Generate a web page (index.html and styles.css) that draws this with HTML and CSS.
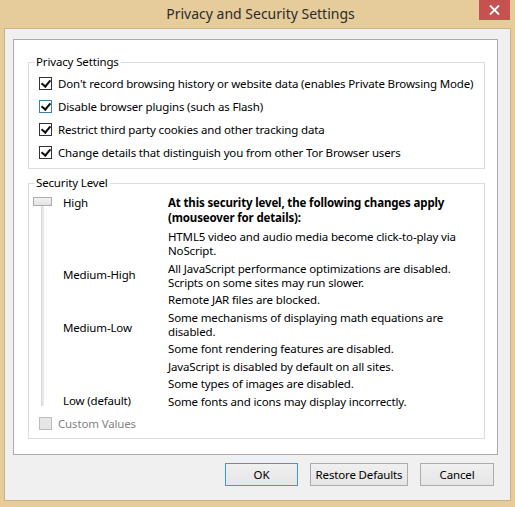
FILE: index.html
```html
<!DOCTYPE html>
<html>
<head>
<meta charset="utf-8">
<link rel="stylesheet" href="styles.css">
</head>
<body>
<div class="window">
  <div class="titlebar">
    <div class="title">Privacy and Security Settings</div>
    <div class="close"><svg width="11" height="10" viewBox="0 0 11 10"><path d="M1 0.5 L10 9.5 M10 0.5 L1 9.5" stroke="#fff" stroke-width="1.8"/></svg></div>
  </div>
  <div class="client">
    <div class="panel">
      <fieldset class="group privacy">
        <legend>Privacy Settings</legend>
        <label class="row"><span class="cb checked"></span><span>Don't record browsing history or website data (enables Private Browsing Mode)</span></label>
        <label class="row"><span class="cb checked hover"></span><span>Disable browser plugins (such as Flash)</span></label>
        <label class="row"><span class="cb checked"></span><span>Restrict third party cookies and other tracking data</span></label>
        <label class="row"><span class="cb checked"></span><span>Change details that distinguish you from other Tor Browser users</span></label>
      </fieldset>
      <fieldset class="group security">
        <legend>Security Level</legend>
        <div class="sec">
          <div class="slider">
            <div class="track-col">
              <div class="thumb"></div>
              <div class="track"></div>
            </div>
            <div class="levels">
              <div class="lvl l1">High</div>
              <div class="lvl l2">Medium-High</div>
              <div class="lvl l3">Medium-Low</div>
              <div class="lvl l4">Low (default)</div>
            </div>
          </div>
          <div class="desc">
            <p class="head">At this security level, the following changes apply (mouseover for details):</p>
            <p>HTML5 video and audio media become click-to-play via NoScript.</p>
            <p>All JavaScript performance optimizations are disabled. Scripts on some sites may run slower.</p>
            <p>Remote JAR files are blocked.</p>
            <p>Some mechanisms of displaying math equations are disabled.</p>
            <p>Some font rendering features are disabled.</p>
            <p>JavaScript is disabled by default on all sites.</p>
            <p>Some types of images are disabled.</p>
            <p>Some fonts and icons may display incorrectly.</p>
          </div>
        </div>
        <label class="row custom"><span class="cb disabled"></span><span>Custom Values</span></label>
      </fieldset>
    </div>
    <div class="buttons">
      <button class="btn ok">OK</button>
      <button class="btn restore">Restore Defaults</button>
      <button class="btn cancel">Cancel</button>
    </div>
  </div>
</div>
</body>
</html>
```
FILE: styles.css
```css
* { box-sizing: border-box; }
html, body { margin: 0; padding: 0; }
body {
  width: 515px;
  height: 507px;
  overflow: hidden;
  font-family: "Noto Sans", "Open Sans", sans-serif;
  font-size: 11.5px;
  letter-spacing: -0.15px;
  color: #000;
}
.window {
  width: 515px;
  height: 507px;
  background: #e6cc9a;
  padding: 0 4px 6px 4px;
  display: flex;
  flex-direction: column;
}
.titlebar {
  position: relative;
  height: 28px;
  display: flex;
  align-items: center;
  justify-content: center;
}
.title {
  font-size: 14px;
  letter-spacing: 0;
  color: #2b2b2b;
  margin-top: -2px;
  margin-left: 6px;
}
.close {
  position: absolute;
  top: 0;
  right: 1px;
  width: 31px;
  height: 20px;
  background: #c75050;
  display: flex;
  align-items: center;
  justify-content: center;
}
.client {
  flex: 1;
  background: #f0f0f0;
  border: 1px solid #c9b285;
  padding: 10px 0 0 8px;
}
.panel {
  width: 485px;
  height: 416px;
  background: #fff;
  border: 1px solid #ababab;
  padding: 14px 12px 0 14px;
}
.group {
  margin: 0;
  border: 1px solid #dcdcdc;
  padding: 0;
}
.group legend {
  padding: 0 2px;
  margin-left: 5px;
  line-height: 16px;
}
.privacy {
  height: 115px;
  padding-top: 2px;
}
.row {
  display: flex;
  align-items: center;
  gap: 6px;
  height: 23px;
  padding-left: 10px;
}
.cb {
  width: 13px;
  height: 13px;
  border: 1px solid #333;
  background: #fff;
  position: relative;
  flex: none;
}
.cb.hover { border-color: #3c7fb1; }
.cb.checked::after {
  content: "";
  position: absolute;
  left: 3px;
  top: 0px;
  width: 4px;
  height: 7px;
  border-right: 2px solid #111;
  border-bottom: 2px solid #111;
  transform: rotate(40deg);
}
.cb.disabled {
  background: #e6e6e6;
  border-color: #bcbcbc;
}
.security {
  margin-top: 6px;
  height: 264px;
  padding-top: 4px;
}
.sec {
  display: flex;
}
.slider {
  width: 139px;
  display: flex;
  flex: none;
}
.track-col {
  width: 24px;
  display: flex;
  flex-direction: column;
  align-items: flex-start;
  padding-left: 4px;
}
.thumb {
  width: 19px;
  height: 9px;
  border: 1px solid #acacac;
  background: linear-gradient(#f2f2f2, #e3e3e3);
  margin-top: 2px;
}
.track {
  width: 3px;
  height: 200px;
  margin-left: 8px;
  background: #e7eaea;
  border-left: 1px solid #d6d6d6;
}
.levels {
  padding-left: 10px;
}
.lvl { line-height: 14px; }
.l1 { margin-top: 1px; }
.l2 { margin-top: 58px; }
.l3 { margin-top: 39px; }
.l4 { margin-top: 59px; }
.desc {
  width: 305px;
}
.desc p {
  margin: 0 0 3.5px 0;
  line-height: 14px;
}
.desc p.head {
  font-weight: bold;
  line-height: 15px;
  margin-bottom: 5px;
}
.custom {
  margin-top: 0;
  color: #838383;
}
.buttons {
  display: flex;
  justify-content: flex-end;
  gap: 12px;
  padding: 8px 16px 0 0;
}
.btn {
  font-family: inherit;
  font-size: 11.5px;
  letter-spacing: -0.15px;
  height: 23px;
  border: 1px solid #acacac;
  background: linear-gradient(#f0f0f0, #e5e5e5);
  color: #000;
  padding: 0;
}
.btn.ok { width: 73px; border-color: #3399ff; }
.btn.restore { width: 98px; }
.btn.cancel { width: 74px; }
```
